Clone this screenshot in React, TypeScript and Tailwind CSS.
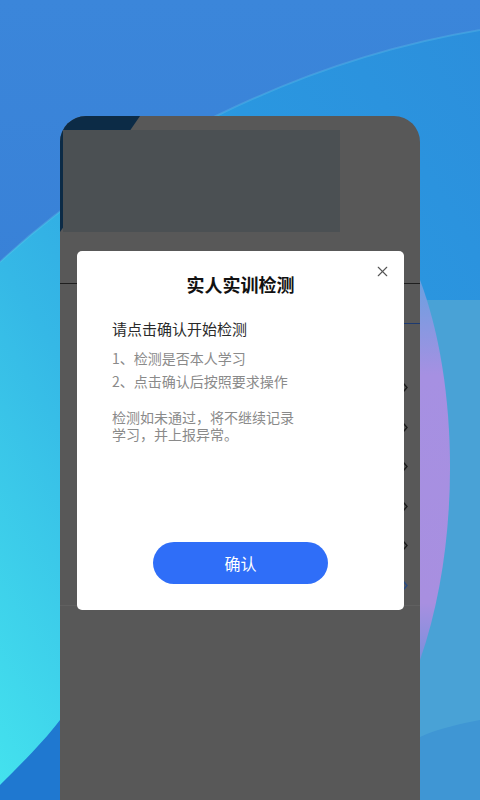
import { X } from "lucide-react";

const rows = [0, 1, 2, 3, 4, 5];

function Backdrop() {
  return (
    <svg
      className="absolute inset-0"
      width="480"
      height="800"
      viewBox="0 0 480 800"
    >
      <defs>
        <linearGradient id="sky" x1="0" y1="0" x2="0" y2="1">
          <stop offset="0" stopColor="#3b86da" />
          <stop offset="1" stopColor="#3478d2" />
        </linearGradient>
        <linearGradient id="sweep" x1="0" y1="1" x2="1" y2="0">
          <stop offset="0" stopColor="#44e3ee" />
          <stop offset="0.35" stopColor="#35b8e6" />
          <stop offset="0.7" stopColor="#2a97e0" />
          <stop offset="1" stopColor="#2c8fdc" />
        </linearGradient>
        <linearGradient id="lilac" x1="0" y1="0" x2="0" y2="1">
          <stop offset="0" stopColor="#6aa0e0" />
          <stop offset="0.25" stopColor="#a690e2" />
          <stop offset="0.85" stopColor="#a88fe0" />
          <stop offset="1" stopColor="#7a8fdc" />
        </linearGradient>
      </defs>
      <rect width="480" height="800" fill="url(#sky)" />
      {/* light sweep from bottom-left to top-right */}
      <path
        d="M0 262 C 120 150, 300 60, 480 30 L480 800 L0 800 Z"
        fill="url(#sweep)"
      />
      <path
        d="M0 262 C 120 150, 300 60, 480 30"
        stroke="#6fd8ee"
        strokeWidth="2"
        fill="none"
        opacity="0.25"
      />
      {/* lower right field */}
      <path d="M420 300 L480 300 L480 800 L420 800 Z" fill="#49a2d6" />
      <path d="M420 280 C 458 380, 462 540, 420 660 Z" fill="url(#lilac)" />
      {/* darker corner bottom-left */}
      <path d="M0 800 L0 785 C 25 760, 45 740, 60 720 L60 800 Z" fill="#1f78d0" />
      {/* bottom-right soft wave */}
      <path d="M420 737 C 440 728, 460 724, 480 720 L480 800 L420 800 Z" fill="#3f96d4" />
    </svg>
  );
}

function Chevron({ color }: { color: string }) {
  return (
    <svg width="5" height="9" viewBox="0 0 5 9">
      <path d="M0.8 0.8 L4 4.5 L0.8 8.2" stroke={color} strokeWidth="1.4" fill="none" />
    </svg>
  );
}

function ConfirmDialog() {
  return (
    <div className="absolute left-[17px] top-[135px] flex h-[359px] w-[327px] flex-col items-center rounded-[5px] bg-white">
      <button className="absolute right-[13px] top-[12px] text-[#555]">
        <X size={17} strokeWidth={1.6} />
      </button>
      <h2 className="mt-[20px] text-[18px] font-bold leading-[26px] text-[#111]">
        实人实训检测
      </h2>
      <div className="mt-[22px] w-full pl-[35px]">
        <p className="text-[15px] leading-[20px] text-[#2a2a2a]">请点击确认开始检测</p>
        <div className="mt-[8px] text-[14px] leading-[23px] text-[#8a8a8a]">
          <p>1、检测是否本人学习</p>
          <p>2、点击确认后按照要求操作</p>
        </div>
        <p className="mt-[16px] w-[190px] text-[14px] leading-[17px] text-[#8a8a8a]">
          检测如未通过，将不继续记录学习，并上报异常。
        </p>
      </div>
      <button className="mt-auto mb-[26px] flex h-[42px] w-[175px] items-center justify-center rounded-full bg-[#2f6ef8] text-[16px] text-white">
        确认
      </button>
    </div>
  );
}

export default function App() {
  return (
    <div
      className="relative h-[800px] w-[480px] overflow-hidden"
      style={{ fontFamily: '"Noto Sans CJK SC", "Noto Sans", sans-serif' }}
    >
      <Backdrop />
      <div className="relative px-[60px] pt-[116px]">
        <div className="relative h-[684px] overflow-hidden rounded-t-[26px] bg-[#585858]">
          {/* header strip with the dim banner */}
          <div className="relative h-[167px]">
            <svg className="absolute left-0 top-0" width="90" height="140" viewBox="0 0 90 140">
              <path d="M0 0 L80 0 L0 116 Z" fill="#0c2b46" />
            </svg>
            <div className="absolute left-[3px] top-[14px] h-[102px] w-[277px] bg-[#4b5053]" />
          </div>
          <div className="h-[1px] bg-[#1f1f1f]" />
          <div className="flex h-[40px] justify-end">
            <div className="mt-auto h-[1px] w-[16px] bg-[#1d3a70]" />
          </div>
          <div className="flex flex-col pt-[44px]">
            {rows.map((r) => (
              <div key={r} className="flex h-[39.5px] items-center justify-end pr-[12px]">
                <Chevron color={r === 5 ? "#284a80" : "#1a1a1a"} />
              </div>
            ))}
          </div>
          <div className="h-[1px] bg-[#606060]" />
          <ConfirmDialog />
        </div>
      </div>
    </div>
  );
}
